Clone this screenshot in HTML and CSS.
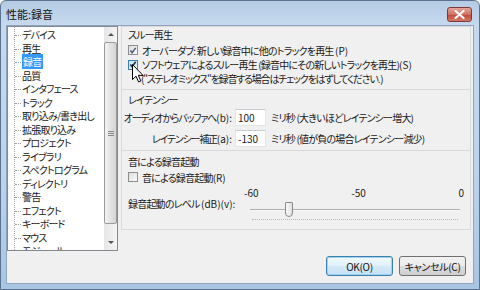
FILE: index.html
```html
<!DOCTYPE html>
<html lang="ja">
<head>
    <meta charset="UTF-8">
    <title>性能:録音</title>
    <link rel="stylesheet" href="styles.css">
</head>
<body>
    <div class="window">
        <div class="titlebar">
            <span class="title">性能:録音</span>
            <span class="close">
                <svg width="11" height="9" viewBox="0 0 11 9"><path d="M1.5 1 L9.5 8 M9.5 1 L1.5 8" stroke="#fff" stroke-width="2.2" stroke-linecap="round"/></svg>
            </span>
        </div>
        <div class="client">
            <div class="main">
                <div class="tree">
                    <ul class="tree-list">
                        <li>デバイス</li>
                        <li>再生</li>
                        <li><span class="sel">録音</span></li>
                        <li>品質</li>
                        <li>インタフェース</li>
                        <li>トラック</li>
                        <li>取り込み/書き出し</li>
                        <li>拡張取り込み</li>
                        <li>プロジェクト</li>
                        <li>ライブラリ</li>
                        <li>スペクトログラム</li>
                        <li>ディレクトリ</li>
                        <li>警告</li>
                        <li>エフェクト</li>
                        <li>キーボード</li>
                        <li>マウス</li>
                        <li>モジュール</li>
                    </ul>
                    <div class="scrollbar">
                        <div class="arrow up"></div>
                        <div class="thumb"><span class="grip"></span></div>
                        <div class="track-rest"></div>
                        <div class="arrow down"></div>
                    </div>
                </div>
                <div class="panel">
                    <div class="group g1">
                        <div class="group-title">スルー再生</div>
                        <label class="check-row"><span class="box checked"><svg width="9" height="9" viewBox="0 0 9 9"><path d="M1.5 4.5 L3.5 7 L7.5 1.5" fill="none" stroke="#4a5a74" stroke-width="1.6"/></svg></span>オーバーダブ: 新しい録音中に他のトラックを再生 <span class="key">(P)</span></label>
                        <label class="check-row"><span class="box checked hover"><svg width="9" height="9" viewBox="0 0 9 9"><path d="M1.5 4.5 L3.5 7 L7.5 1.5" fill="none" stroke="#1f2f4f" stroke-width="1.8"/></svg></span>ソフトウェアによるスルー再生 (録音中にその新しいトラックを再生)<span class="key">(S)</span></label>
                        <div class="note">("ステレオミックス"を録音する場合はチェックをはずしてください. )</div>
                    </div>
                    <div class="group g2">
                        <div class="group-title">レイテンシー</div>
                        <div class="latency">
                            <span class="lbl">オーディオからバッファへ<span class="key">(b):</span></span>
                            <span class="field">100</span>
                            <span class="unit">ミリ秒 (大きいほどレイテンシー増大)</span>
                            <span class="lbl">レイテンシー補正<span class="key">(a):</span></span>
                            <span class="field">-130</span>
                            <span class="unit">ミリ秒 (値が負の場合レイテンシー減少)</span>
                        </div>
                    </div>
                    <div class="group g3">
                        <div class="group-title">音による録音起動</div>
                        <label class="check-row"><span class="box"></span>音による録音起動<span class="key">(R)</span></label>
                        <div class="level">
                            <span class="level-lbl">録音起動のレベル <span class="key">(dB)(v):</span></span>
                            <div class="slider">
                                <div class="scale"><span>-60</span><span>-50</span><span>0</span></div>
                                <div class="track">
                                    <span class="knob"></span>
                                </div>
                                <div class="ticks"></div>
                            </div>
                        </div>
                    </div>
                </div>
            </div>
            <div class="buttons">
                <button class="btn default">OK(O)</button>
                <button class="btn">キャンセル(C)</button>
            </div>
        </div>
        <svg class="cursor" width="12" height="19" viewBox="0 0 12 19"><path d="M0.5 0.5 L0.5 15.5 L4 12.2 L6.6 18 L8.8 17 L6.3 11.4 L11 11.4 Z" fill="#fff" stroke="#000" stroke-width="1"/></svg>
    </div>
</body>
</html>
```

FILE: styles.css
```css
body {
    margin: 0;
    font-family: "Noto Sans CJK JP", "Noto Sans", sans-serif;
    font-size: 10px;
    font-feature-settings: "palt";
    letter-spacing: -0.8px;
    color: #1a1a1a;
}
.key { letter-spacing: 0; }
.window {
    position: relative;
    width: 480px;
    height: 290px;
    box-sizing: border-box;
    border: 1px solid #5a7390;
    border-radius: 6px 6px 0 0;
    background: linear-gradient(#b4cbe4, #c6d9ee 24px, #bdd3ea 60%, #a9c5e4);
    padding: 0 5px 5px 5px;
    display: flex;
    flex-direction: column;
}
.titlebar {
    height: 24px;
    display: flex;
    justify-content: space-between;
    align-items: flex-start;
}
.title { font-size: 11px; letter-spacing: 0; margin-top: 5px; color: #111; }
.close {
    width: 25px;
    height: 15px;
    margin-top: 6px;
    margin-right: 2px;
    box-sizing: border-box;
    border: 1px solid #7a3a3a;
    border-radius: 3px;
    background: linear-gradient(#e4a597, #d06f60 50%, #c0473a 51%, #d7776a);
    display: flex;
    align-items: center;
    justify-content: center;
}
.client {
    flex: 1;
    background: #f0f0f0;
    border: 1px solid #8fa5bf;
    display: flex;
    flex-direction: column;
}
.main { display: flex; height: 225px; }

/* tree */
.tree {
    width: 111px;
    box-sizing: border-box;
    border: 1px solid #828790;
    background: #fff;
    display: flex;
}
.tree-list {
    flex: 1;
    list-style: none;
    margin: 0 0 0 6px;
    padding: 1px 0 0 0;
    border-left: 1px dotted #a0a0a0;
    overflow: hidden;
}
.tree-list li {
    position: relative;
    line-height: 13.5px;
    height: 13.5px;
    padding-left: 7px;
    white-space: nowrap;
}
.tree-list li::before {
    content: "";
    position: absolute;
    left: 0;
    top: 7px;
    width: 6px;
    border-top: 1px dotted #a0a0a0;
}
.sel { background: #3399ff; color: #fff; padding: 0 2px 0 1px; }
.scrollbar {
    width: 13px;
    display: flex;
    flex-direction: column;
    background: linear-gradient(90deg, #e6e6e6, #f5f5f5);
}
.arrow { height: 15px; position: relative; }
.arrow::after {
    content: "";
    position: absolute;
    left: 4px;
    top: 6px;
    border-left: 3px solid transparent;
    border-right: 3px solid transparent;
}
.arrow.up::after { border-bottom: 3px solid #555; }
.arrow.down::after { border-top: 3px solid #555; }
.thumb {
    height: 182px;
    box-sizing: border-box;
    border: 1px solid #9a9a9a;
    border-radius: 2px;
    background: linear-gradient(90deg, #f4f4f4, #e2e2e2 50%, #d4d4d4);
    display: flex;
    align-items: center;
    justify-content: center;
}
.grip {
    width: 6px;
    height: 5px;
    border-top: 1px solid #888;
    border-bottom: 1px solid #888;
    box-sizing: border-box;
    position: relative;
}
.grip::after {
    content: "";
    position: absolute;
    left: 0;
    right: 0;
    top: 1px;
    border-top: 1px solid #888;
}
.track-rest { flex: 1; }

/* right side */
.panel {
    width: 350px;
    margin-left: 3px;
    display: flex;
    flex-direction: column;
}
.group {
    border: 1px solid #d9d9d9;
    box-sizing: border-box;
    padding: 1px 6px 0 6px;
    overflow: hidden;
}
.group + .group { border-top: none; }
.g1 { height: 64px; }
.g2 { height: 61px; padding-top: 3px; }
.g3 { height: 79px; padding-top: 4px; }
.group-title { line-height: 14px; margin-bottom: 1px; }
.check-row {
    display: flex;
    align-items: center;
    height: 14.5px;
    white-space: pre;
}
.box {
    width: 10px;
    height: 10px;
    box-sizing: border-box;
    border: 1px solid #8f8f8f;
    background: linear-gradient(135deg, #dcdcdc, #fbfbfb);
    margin-right: 4px;
    display: flex;
    align-items: center;
    justify-content: center;
}
.box.hover { border-color: #3c7fb1; background: linear-gradient(135deg, #c6e4f7, #eaf6fd); }
.note { line-height: 14.5px; padding-left: 13px; white-space: nowrap; letter-spacing: -1.2px; }

.latency {
    display: grid;
    grid-template-columns: 104px 31px 1fr;
    column-gap: 3px;
    row-gap: 4px;
    align-items: center;
    margin-top: 2px;
}
.lbl {
    display: flex;
    justify-content: flex-end;
    white-space: nowrap;
    letter-spacing: -1.2px;
}
.lbl .key { letter-spacing: 0; }
.field {
    height: 17px;
    line-height: 15px;
    box-sizing: border-box;
    background: #fff;
    border: 1px solid #e2e5ea;
    border-top-color: #c9ccd2;
    padding-left: 2px;
    letter-spacing: 0;
}
.unit { padding-left: 2px; white-space: nowrap; }

.level {
    display: grid;
    grid-template-columns: 116px 220px;
    align-items: end;
    margin-top: 1px;
}
.level-lbl { white-space: nowrap; margin-bottom: 11px; }
.scale {
    display: flex;
    justify-content: space-between;
    line-height: 13px;
    letter-spacing: 0;
}
.track {
    position: relative;
    height: 17px;
    margin: 2px 4px 0 6px;
}
.track::before {
    content: "";
    position: absolute;
    left: 0;
    right: 0;
    top: 8px;
    border-top: 1px solid #b0b0b0;
    border-bottom: 1px solid #f8f8f8;
}
.knob {
    position: absolute;
    left: 35px;
    top: 1px;
    width: 8px;
    height: 15px;
    box-sizing: border-box;
    border: 1px solid #8a8a8a;
    border-radius: 1px 1px 4px 4px;
    background: linear-gradient(90deg, #fafafa, #e0e0e0);
}
.ticks {
    height: 2px;
    margin: 1px 6px 0 8px;
    border-top: 1px dotted #b8b8b8;
}

.buttons {
    display: flex;
    justify-content: flex-end;
    gap: 6px;
    margin-top: 5px;
    padding-right: 7px;
}
.btn {
    width: 67px;
    height: 20px;
    font-family: inherit;
    font-size: 10px;
    font-feature-settings: "palt";
    letter-spacing: -0.3px;
    color: #111;
    border: 1px solid #707070;
    border-radius: 3px;
    background: linear-gradient(#f2f2f2, #ebebeb 50%, #dddddd 51%, #cfcfcf);
    padding: 0;
}
.btn.default {
    border-color: #3c7fb1;
    background: linear-gradient(#f0f8fd, #e2f1fb 50%, #d3eaf8 51%, #c4e2f5);
    box-shadow: inset 0 0 0 1px #9fd3f2;
}
.cursor {
    position: absolute;
    left: 131px;
    top: 63px;
}
```
